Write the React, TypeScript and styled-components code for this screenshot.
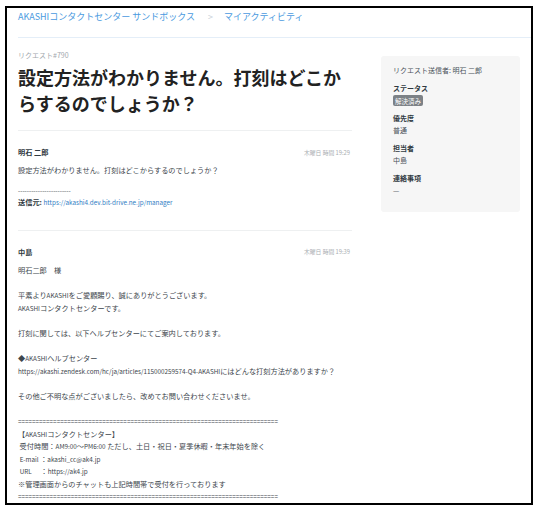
import React from "react";
import styled, { createGlobalStyle } from "styled-components";

const Global = createGlobalStyle`
  html, body { margin: 0; padding: 0; background: #fff; }
  body {
    font-family: "Noto Sans CJK JP", "Noto Sans", sans-serif;
    color: #2f3941;
    -webkit-font-smoothing: antialiased;
  }
  * { box-sizing: border-box; }
`;

const Frame = styled.div`
  margin: 6px 0 0 5px;
  width: 528px;
  height: 499px;
  border: 2px solid #000;
  overflow: hidden;
  background: #fff;
  display: flex;
  flex-direction: column;
`;

const SubNav = styled.nav`
  margin-left: 11px;
  height: 30px;
  padding-top: 3px;
  border-bottom: 1px solid #e4eef8;
  flex-shrink: 0;
`;

const Crumbs = styled.ol`
  list-style: none;
  margin: 0;
  padding: 0;
  display: flex;
  align-items: center;
  font-size: 9px;
  line-height: 12px;
`;

const Crumb = styled.li`
  color: #4a9ae0;
  white-space: nowrap;
`;

const Sep = styled.li`
  color: #c8d0d8;
  margin: 0 11px 0 13px;
  font-size: 9px;
`;

const Layout = styled.div`
  display: grid;
  grid-template-columns: 334px 139px;
  column-gap: 29px;
  padding: 0 11px;
  align-items: start;
`;

const Main = styled.main`
  padding-top: 12px;
`;

const RequestId = styled.div`
  font-size: 7px;
  line-height: 10px;
  color: #a2a8ad;
`;

const Title = styled.h1`
  margin: 4px 0 0;
  font-size: 18px;
  line-height: 26px;
  font-weight: 700;
  color: #222;
  padding-bottom: 14px;
  border-bottom: 1px solid #eef0f1;
`;

const Comment = styled.article<{ $last?: boolean }>`
  padding: 16px 0 ${(p) => (p.$last ? "0" : "21px")};
  border-bottom: ${(p) => (p.$last ? "none" : "1px solid #eef0f1")};
`;

const CommentHead = styled.header`
  display: flex;
  justify-content: space-between;
  align-items: center;
  height: 10px;
`;

const Author = styled.span`
  font-size: 7.2px;
  font-weight: 700;
  color: #2f3941;
`;

const Meta = styled.span`
  font-size: 5.8px;
  color: #a9aeb2;
  padding-right: 2px;
`;

const Body = styled.div`
  margin-top: 7px;
  font-size: 7.2px;
  line-height: 12.6px;
  color: #3d464d;
`;

const P = styled.p<{ $gap?: number }>`
  margin: 0 0 ${(p) => p.$gap ?? 0}px;
  white-space: pre;
`;

const Lat = styled.span`
  font-size: 0.88em;
  line-height: 1;
`;

const Strong = styled.span`
  font-weight: 700;
  color: #2f3941;
`;

const Link = styled.a`
  color: #2f7dc4;
  text-decoration: none;
`;

const Sidebar = styled.aside`
  margin-top: 18px;
  background: #f6f6f6;
  border-radius: 3px;
  padding: 9px 12px 16px;
  font-size: 7px;
  line-height: 11px;
  color: #4a525a;
`;

const Requester = styled.div`
  margin-bottom: 7px;
`;

const Group = styled.dl`
  margin: 0 0 7px;
  &:last-child { margin-bottom: 0; }
`;

const Label = styled.dt`
  font-weight: 700;
  color: #2f3941;
  margin-bottom: 1px;
`;

const Value = styled.dd`
  margin: 0;
`;

const Badge = styled.span`
  display: inline-block;
  background: #7c8186;
  color: #fff;
  font-size: 6.5px;
  line-height: 10px;
  height: 11px;
  padding: 0.5px 2px 0;
  border-radius: 2px;
  vertical-align: top;
`;

function Mixed({ text }: { text: string }) {
  const parts = text.split(/([\x21-\x7E][\x20-\x7E]*[\x21-\x7E]|[\x21-\x7E])/);
  return (
    <>
      {parts.map((s, i) => (i % 2 === 1 ? <Lat key={i}>{s}</Lat> : s))}
    </>
  );
}

const eq = "=".repeat(74);

const reply = [
  "明石二郎　様",
  "",
  "平素よりAKASHIをご愛顧賜り、誠にありがとうございます。",
  "AKASHIコンタクトセンターです。",
  "",
  "打刻に関しては、以下ヘルプセンターにてご案内しております。",
  "",
  "◆AKASHIヘルプセンター",
  "https://akashi.zendesk.com/hc/ja/articles/115000259574-Q4-AKASHIにはどんな打刻方法がありますか？",
  "",
  "その他ご不明な点がございましたら、改めてお問い合わせくださいませ。",
  "",
  eq,
  "【AKASHIコンタクトセンター】",
  " 受付時間：AM9:00〜PM6:00 ただし、土日・祝日・夏季休暇・年末年始を除く",
  " E-mail ：akashi_cc@ak4.jp",
  " URL　 ：https://ak4.jp",
  "※管理画面からのチャットも上記時間帯で受付を行っております",
  eq,
].join("\n");

export default function App() {
  return (
    <>
      <Global />
      <Frame>
        <SubNav>
          <Crumbs>
            <Crumb>AKASHIコンタクトセンター サンドボックス</Crumb>
            <Sep>&gt;</Sep>
            <Crumb>マイアクティビティ</Crumb>
          </Crumbs>
        </SubNav>
        <Layout>
          <Main>
            <RequestId>リクエスト#790</RequestId>
            <Title>
              設定方法がわかりません。打刻はどこか
              <br />
              らするのでしょうか？
            </Title>
            <Comment>
              <CommentHead>
                <Author>明石 二郎</Author>
                <Meta>木曜日 時間 19:29</Meta>
              </CommentHead>
              <Body>
                <P $gap={7}>設定方法がわかりません。打刻はどこからするのでしょうか？</P>
                <P>
                  <Lat>------------------------</Lat>
                </P>
                <P>
                  <Strong>送信元: </Strong>
                  <Link href="#">
                    <Lat>https://akashi4.dev.bit-drive.ne.jp/manager</Lat>
                  </Link>
                </P>
              </Body>
            </Comment>
            <Comment $last>
              <CommentHead>
                <Author>中島</Author>
                <Meta>木曜日 時間 19:39</Meta>
              </CommentHead>
              <Body>
                <P>
                  <Mixed text={reply} />
                </P>
              </Body>
            </Comment>
          </Main>
          <Sidebar>
            <Requester>リクエスト送信者: 明石 二郎</Requester>
            <Group>
              <Label>ステータス</Label>
              <Value>
                <Badge>解決済み</Badge>
              </Value>
            </Group>
            <Group>
              <Label>優先度</Label>
              <Value>普通</Value>
            </Group>
            <Group>
              <Label>担当者</Label>
              <Value>中島</Value>
            </Group>
            <Group>
              <Label>連絡事項</Label>
              <Value>—</Value>
            </Group>
          </Sidebar>
        </Layout>
      </Frame>
    </>
  );
}
